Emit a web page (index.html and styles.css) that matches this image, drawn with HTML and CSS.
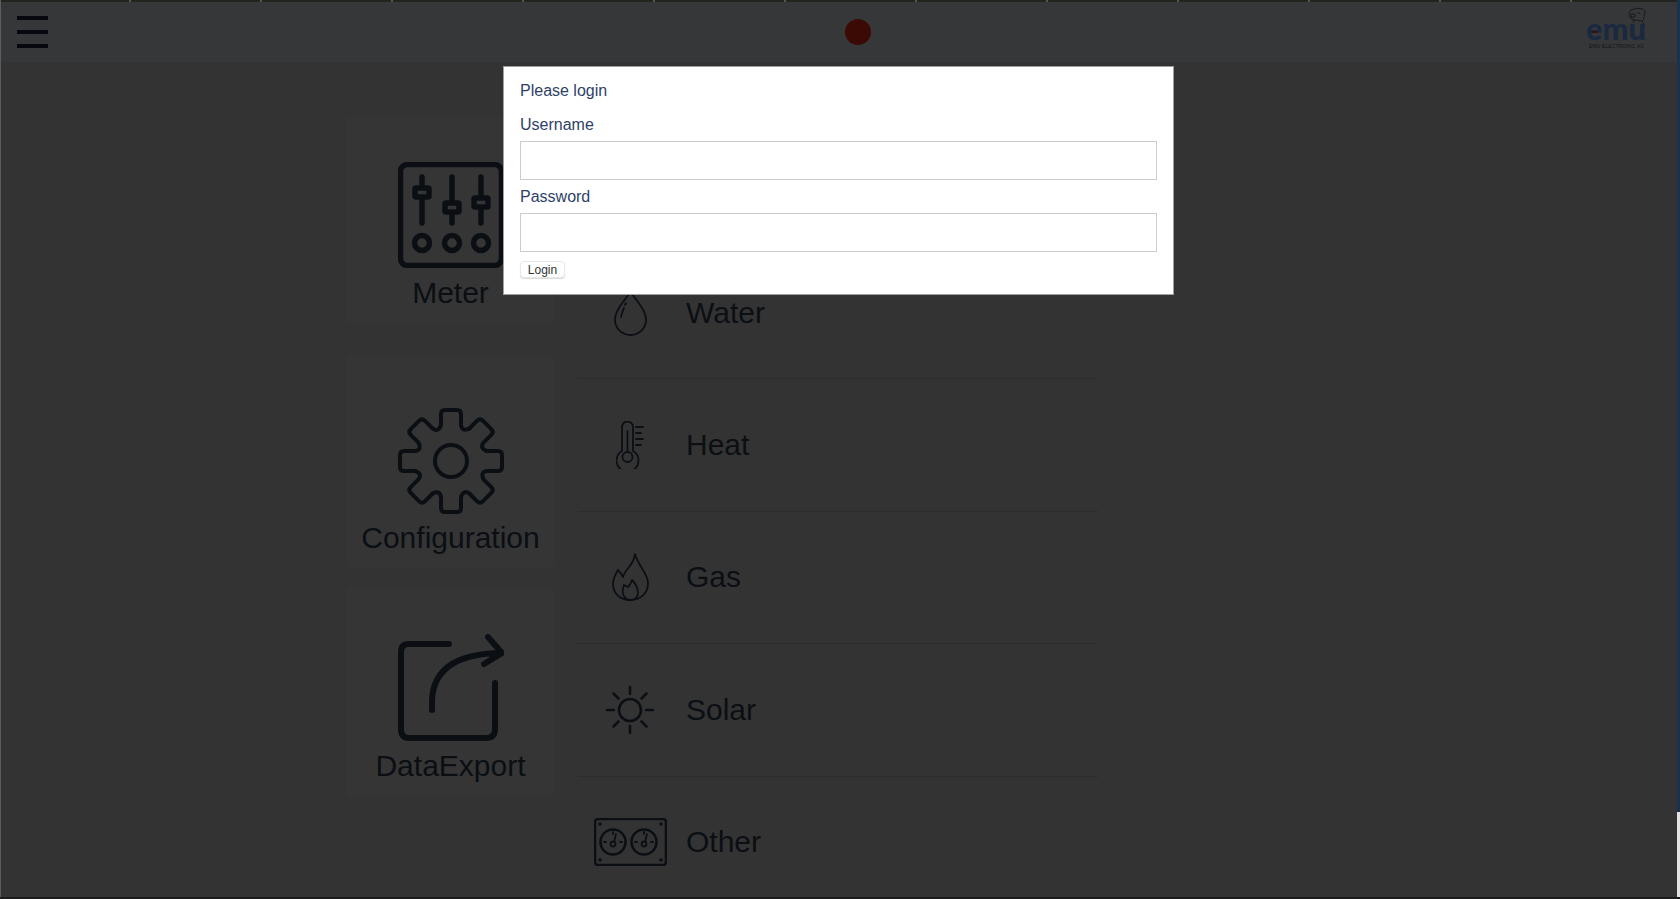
FILE: index.html
```html
<!DOCTYPE html>
<html lang="en">

<head>
  <meta charset="utf-8" />
  <meta name="viewport" content="width=device-width, initial-scale=1.0" />
  <title>EMU - Login</title>
  <link rel="stylesheet" href="styles.css">
</head>

<body>
  <header class="topbar">
    <button class="burger" aria-label="Menu"><span></span><span></span><span></span></button>
    <div class="status-dot"></div>
    <div class="logo">
      <svg class="logo-bird" viewBox="0 0 18 18">
        <path d="M3 3 Q9 0 15 2 Q17 3 17 6 L16 10 Q16 13 14 14 L16 18 M3 3 Q1 5 1 8 Q2 12 6 13 L14 14 M3 7 h4 v3 h-4 z M9 6 h3 M6 13 L5 16" />
      </svg>
      <svg class="logo-word" viewBox="0 0 60 52">
        <text class="logo-name" x="0" y="36" textLength="60" lengthAdjust="spacingAndGlyphs">emu</text>
        <rect class="logo-bar" x="6" y="27" width="6" height="2" />
        <text class="logo-tag" x="3" y="44" textLength="55" lengthAdjust="spacing">EMU ELECTRONIC AG</text>
      </svg>
    </div>
  </header>

  <main class="content">
    <!-- Left tiles -->
    <nav class="tiles">
      <a class="tile tile-meter">
        <svg class="tile-icon" viewBox="0 0 106 106">
          <rect x="2.5" y="2.5" width="101" height="101" rx="7" />
          <path d="M24 15 V24 M24 37 V61 M54 15 V39 M54 52 V61 M83 15 V34 M83 47 V61" />
          <rect x="17" y="26" width="14" height="9" rx="1" />
          <rect x="47" y="41" width="14" height="9" rx="1" />
          <rect x="76" y="36" width="14" height="9" rx="1" />
          <circle cx="24" cy="81" r="7.5" />
          <circle cx="54" cy="81" r="7.5" />
          <circle cx="83" cy="81" r="7.5" />
        </svg>
        <span>Meter</span>
      </a>
      <a class="tile tile-config">
        <svg class="tile-icon tile-icon-thin" viewBox="-53 -53 106 106">
          <defs>
            <path id="gear-part" d="M-10 -36 V-47 Q-10 -51 -6 -51 H6 Q10 -51 10 -47 V-36 Q11 -29 18.4 -32.5" />
          </defs>
          <use href="#gear-part" />
          <use href="#gear-part" transform="rotate(45)" />
          <use href="#gear-part" transform="rotate(90)" />
          <use href="#gear-part" transform="rotate(135)" />
          <use href="#gear-part" transform="rotate(180)" />
          <use href="#gear-part" transform="rotate(225)" />
          <use href="#gear-part" transform="rotate(270)" />
          <use href="#gear-part" transform="rotate(315)" />
          <circle r="16" />
        </svg>
        <span>Configuration</span>
      </a>
      <a class="tile tile-export">
        <svg class="tile-icon tile-icon-tall" viewBox="0 0 106 108">
          <path d="M51 10 H11 Q3 10 3 18 V95 Q3 104 11 104 H88 Q97 104 97 95 V49" />
          <path d="M34 76 V66 Q36 21 100 19 M90 3 L104 19 L86 30" />
        </svg>
        <span>DataExport</span>
      </a>
    </nav>

    <!-- Meter types -->
    <ul class="types">
      <li class="type">
        <div class="type-icon">
          <svg class="drop" width="33" height="45" viewBox="0 0 33 45">
            <path d="M16.5 1 C11 9 1 19 1 29 A15.5 15 0 0 0 32 29 C32 19 22 9 16.5 1 Z" />
            <path d="M7 26 Q8 21 10 17 M11 14 L12 12" />
          </svg>
        </div>
        <span>Water</span>
      </li>
      <li class="type">
        <div class="type-icon">
          <svg width="28" height="48" viewBox="0 0 28 48">
            <path d="M6 30 V6 A5.5 5.5 0 0 1 17 6 V30 A11 11 0 1 1 6 30 Z" />
            <circle cx="11.5" cy="36" r="5" />
            <path d="M11.5 31 V10 M20 6 H27 M20 12 H25 M20 18 H27 M20 24 H25" />
          </svg>
        </div>
        <span>Heat</span>
      </li>
      <li class="type">
        <div class="type-icon">
          <svg width="37" height="48" viewBox="0 0 37 48">
            <path d="M23 1 Q22 8 17 14 Q12 20 11 24 Q9 20 6 17 Q1 25 1 31 C1 41 9 47 18 47 C28 47 36 41 36 30 C36 20 26 13 23 1 Z" />
            <path d="M20 27 Q19 31 16 34 L12 32 Q10 37 11 41 Q13 47 19 47 Q26 46 26 40 Q26 33 20 27 Z" />
          </svg>
        </div>
        <span>Gas</span>
      </li>
      <li class="type">
        <div class="type-icon">
          <svg width="50" height="50" viewBox="0 0 50 50">
            <circle class="bold" cx="25" cy="25" r="11" />
            <path class="bold" d="M25 2 V9 M25 41 V48 M2 25 H9 M41 25 H48 M8.5 8.5 L13.5 13.5 M36.5 36.5 L41.5 41.5 M41.5 8.5 L36.5 13.5 M13.5 36.5 L8.5 41.5" />
          </svg>
        </div>
        <span>Solar</span>
      </li>
      <li class="type">
        <div class="type-icon">
          <svg width="73" height="48" viewBox="0 0 73 48">
            <rect class="bold" x="1" y="1" width="71" height="46" rx="3" />
            <circle cx="19" cy="24" r="12.5" class="bold" />
            <circle cx="50" cy="24" r="12.5" class="bold" />
            <circle cx="19" cy="26" r="2.5" />
            <circle cx="50" cy="26" r="2.5" />
            <path d="M20 24 L22 16 M51 24 L53 16 M10 24 H12 M26 24 H28 M19 14 V16 M41 24 H43 M57 24 H59 M50 14 V16" />
            <circle class="dot" cx="6" cy="6" r="1.8" />
            <circle class="dot" cx="67" cy="6" r="1.8" />
            <circle class="dot" cx="6" cy="42" r="1.8" />
            <circle class="dot" cx="67" cy="42" r="1.8" />
          </svg>
        </div>
        <span>Other</span>
      </li>
    </ul>
  </main>

  <!-- Login dialog -->
  <div class="overlay"></div>
  <form class="login">
    <p class="login-title">Please login</p>
    <label for="username">Username</label>
    <input id="username" type="text">
    <label for="password">Password</label>
    <input id="password" type="password">
    <button type="button" class="login-btn">Login</button>
  </form>

  <div class="edge-top"></div>
  <div class="edge-left"></div>
  <div class="edge-right"></div>
  <div class="edge-bottom"></div>
</body>

</html>
```

FILE: styles.css
```css
/* Global Reset */
* {
  margin: 0;
  padding: 0;
  box-sizing: border-box;
}

html,
body {
  height: 100%;
  overflow: hidden;
}

body {
  font-family: 'Liberation Sans', Arial, sans-serif;
  background-color: #cccccc;
  color: #2c3e50;
}

/* Header */
.topbar {
  height: 62px;
  display: flex;
  align-items: center;
  padding: 2px 34px 0 17px;
  background-color: #d8dbe0;
}

.burger {
  width: 31px;
  height: 32px;
  display: flex;
  flex-direction: column;
  justify-content: space-between;
  background: none;
  border: none;
}

.burger span {
  display: block;
  height: 4px;
  background-color: #14233c;
}

.status-dot {
  width: 26px;
  height: 26px;
  margin-left: 797px;
  border-radius: 50%;
  background-color: #ec2a16;
}

.logo {
  position: relative;
  align-self: flex-start;
  margin-left: auto;
  margin-top: 2px;
  width: 60px;
  height: 52px;
}

.logo-bird {
  position: absolute;
  top: 3px;
  right: 0;
  width: 18px;
  height: 18px;
  fill: none;
  stroke: #4a4a4a;
  stroke-width: 0.8;
}

.logo-word {
  display: block;
  width: 60px;
  height: 52px;
}

.logo-name {
  font-family: 'Lato', sans-serif;
  font-size: 31px;
  font-weight: 900;
  fill: #6a9fff;
}

.logo-bar {
  fill: #e04030;
}

.logo-tag {
  font-size: 5px;
  fill: #555;
}

/* Main Content */
.content {
  display: flex;
  gap: 23px;
  padding-left: 346px;
}

.tiles {
  width: 209px;
  margin-top: 54px;
  display: flex;
  flex-direction: column;
}

.tile {
  display: flex;
  flex-direction: column;
  align-items: center;
  padding-top: 46px;
  padding-bottom: 13px;
  font-size: 30px;
  line-height: 36px;
  background-color: #d1d1d1;
  border-radius: 8px;
}

.tile-config {
  margin-top: 31px;
  padding-top: 53px;
}

.tile-export {
  margin-top: 18px;
  padding-top: 47px;
}

.tile-icon {
  width: 106px;
  height: 106px;
  margin-bottom: 7px;
  fill: none;
  stroke: #2c3e50;
  stroke-width: 5.5;
  stroke-linecap: round;
  stroke-linejoin: round;
}

.tile-icon-thin {
  stroke-width: 4;
  margin-bottom: 6px;
}

.tile-icon-tall {
  height: 108px;
  stroke-width: 6;
  margin-bottom: 6px;
}

/* Type list */
.types {
  width: 520px;
  margin-top: 185px;
  list-style: none;
}

.type {
  height: 132.4px;
  display: flex;
  align-items: center;
  font-size: 30px;
  border-bottom: 1px solid #b0b0b0;
}

.type-icon {
  flex: 0 0 104px;
  margin-right: 4px;
  display: flex;
  justify-content: center;
}

.type-icon svg {
  fill: none;
  stroke: #2c3e50;
  stroke-width: 1.8;
  stroke-linecap: round;
  stroke-linejoin: round;
}

.type-icon .drop {
  margin-top: 2px;
}

.type-icon .bold {
  stroke-width: 2.6;
}

.type-icon .dot {
  fill: #2c3e50;
  stroke: none;
}

/* Login dialog */
.overlay {
  position: fixed;
  inset: 0;
  background-color: rgba(0, 0, 0, 0.75);
}

.login {
  position: fixed;
  top: 66px;
  left: 503px;
  width: 671px;
  height: 229px;
  padding: 14px 16px 0;
  display: flex;
  flex-direction: column;
  align-items: flex-start;
  background-color: white;
  border: 1px solid #a0a0a0;
  font-size: 16px;
  color: #2e4268;
}

.login-title {
  line-height: 20px;
  margin-bottom: 14px;
}

.login label {
  line-height: 20px;
  margin-bottom: 6px;
}

.login input {
  width: 100%;
  height: 39px;
  margin-bottom: 7px;
  border: 1px solid #cccccc;
  background-color: white;
}

.login-btn {
  height: 17px;
  width: 45px;
  margin-top: 2px;
  font-family: inherit;
  font-size: 12px;
  color: #333;
  background-color: white;
  border: 1px solid #e8e8e8;
  border-radius: 4px;
  box-shadow: 0 1px 1px rgba(0, 0, 0, 0.15);
}

/* Window edges */
.edge-top {
  position: fixed;
  top: 0;
  left: 0;
  right: 0;
  height: 2px;
  background: repeating-linear-gradient(90deg, #23241f 0 129px, #55554e 129px 131px);
}

.edge-left {
  position: fixed;
  top: 0;
  left: 0;
  bottom: 0;
  width: 1px;
  background-color: #5c5c5c;
}

.edge-right {
  position: fixed;
  top: 0;
  right: 0;
  bottom: 0;
  width: 3px;
  background: linear-gradient(#1c3150 0 812px, #e2e2e6 812px);
}

.edge-bottom {
  position: fixed;
  left: 0;
  right: 0;
  bottom: 0;
  height: 2px;
  background-color: #1c1c1c;
}
```
